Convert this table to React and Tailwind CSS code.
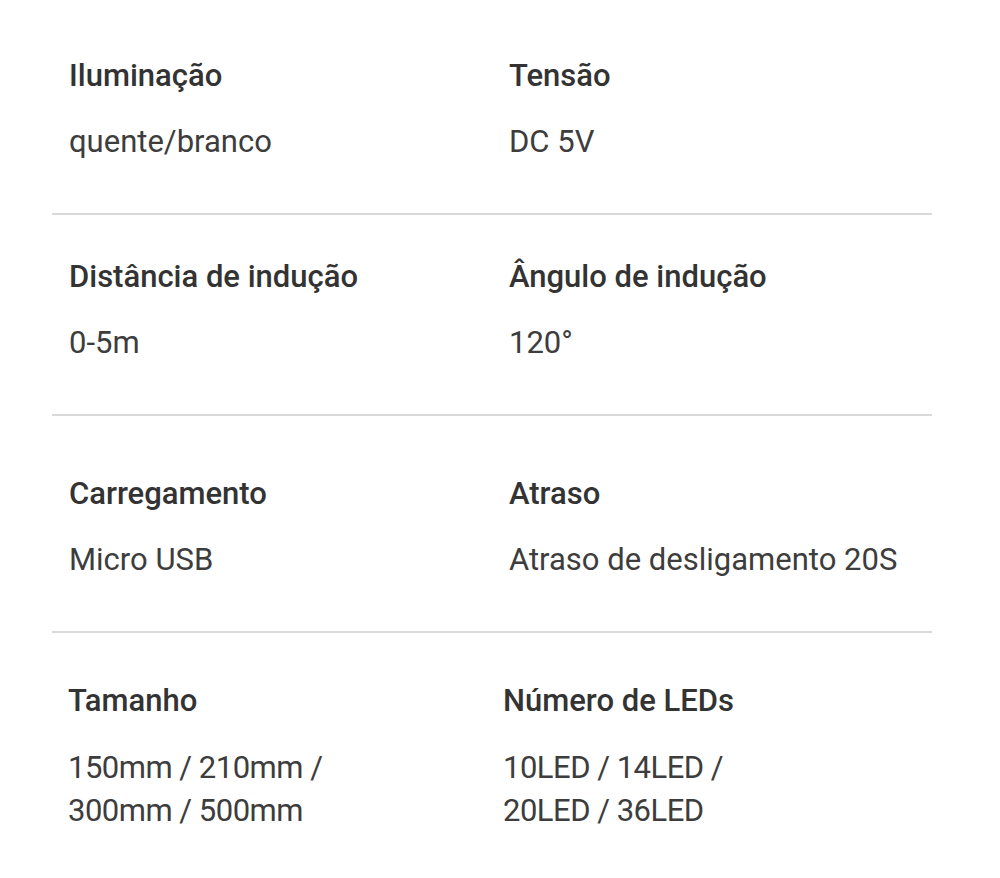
import React from 'react'

const rows = [
  {
    pt: 'pt-[57px]',
    pb: 'pb-[52px]',
    items: [
      { title: 'Iluminação', value: ['quente/branco'] },
      { title: 'Tensão', value: ['DC 5V'] },
    ],
  },
  {
    pt: 'pt-[43px]',
    pb: 'pb-[52px]',
    items: [
      { title: 'Distância de indução', value: ['0-5m'] },
      { title: 'Ângulo de indução', value: ['120°'] },
    ],
  },
  {
    pt: 'pt-[59px]',
    pb: 'pb-[52px]',
    items: [
      { title: 'Carregamento', value: ['Micro USB'] },
      { title: 'Atraso', value: ['Atraso de desligamento 20S'] },
    ],
  },
]

const SpecCell = ({ title, value }) => {
  return (
    <div className="pl-[17px]">
      <h3 className="text-[31px] leading-[38px] font-medium text-[#333333]">{title}</h3>
      <div className="mt-[28px] text-[31px] leading-[38px] font-normal text-[#3d3d3d]">
        {value.map((line) => (
          <p key={line}>{line}</p>
        ))}
      </div>
    </div>
  )
}

const App = () => {
  return (
    <div className="min-h-[878px] bg-white font-['Roboto','Liberation_Sans',sans-serif]">
      <div className="px-[52px] w-[984px]">
        {rows.map((row, i) => (
          <div key={i} className={`grid grid-cols-2 border-b-2 border-[#d9d9d9] ${row.pt} ${row.pb}`}>
            {row.items.map((item) => (
              <SpecCell key={item.title} title={item.title} value={item.value} />
            ))}
          </div>
        ))}

        {/* last block has tighter lines */}
        <div className="grid grid-cols-2 pt-[49px]">
          <div className="pl-[16px]">
            <h3 className="text-[31px] leading-[38px] font-medium text-[#333333]">Tamanho</h3>
            <div className="mt-[26px] text-[31px] leading-[43px] tracking-[-0.5px] text-[#3d3d3d]">
              <p>150mm / 210mm /</p>
              <p>300mm / 500mm</p>
            </div>
          </div>
          <div className="pl-[11px]">
            <h3 className="text-[31px] leading-[38px] font-medium text-[#333333]">Número de LEDs</h3>
            <div className="mt-[26px] text-[31px] leading-[43px] tracking-[-0.5px] text-[#3d3d3d]">
              <p>10LED / 14LED /</p>
              <p>20LED / 36LED</p>
            </div>
          </div>
        </div>
      </div>
    </div>
  )
}

export default App
